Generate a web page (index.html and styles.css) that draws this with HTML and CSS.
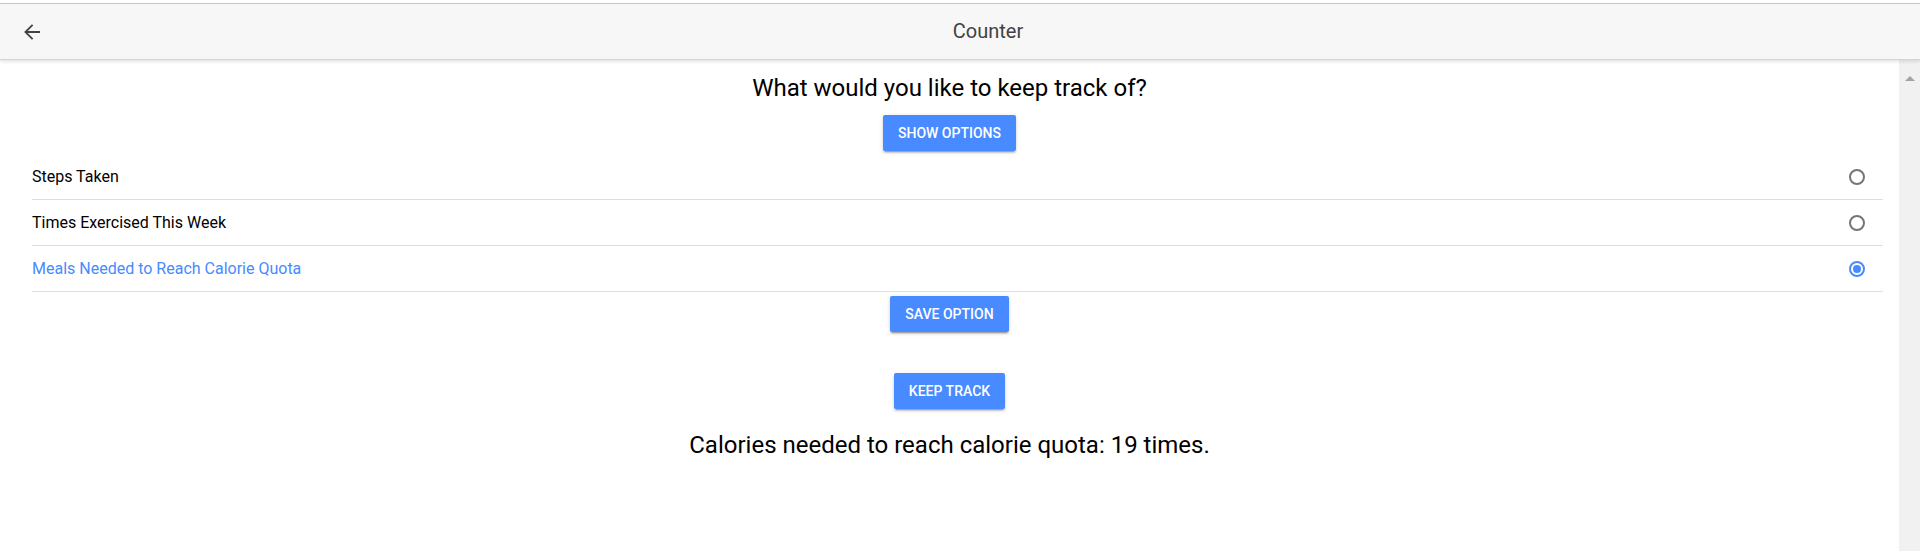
FILE: index.html
```html
<!DOCTYPE html>
<html lang="en">
<head>
<meta charset="utf-8">
<title>Counter</title>
<link rel="stylesheet" href="styles.css">
</head>
<body>
<div class="app">
  <header class="toolbar">
    <button class="back" aria-label="Back">
      <svg width="16" height="16" viewBox="0 0 16 16"><path d="M16 8H1.4M8.6 0.8L1.4 8l7.2 7.2" fill="none" stroke="#424242" stroke-width="1.8"/></svg>
    </button>
    <div class="title">Counter</div>
  </header>
  <div class="body">
    <main class="content">
      <h2 class="question">What would you like to keep track of?</h2>
      <button class="btn btn-show">Show Options</button>
      <ul class="options">
        <li class="option"><span class="label">Steps Taken</span><span class="radio"></span></li>
        <li class="option"><span class="label">Times Exercised This Week</span><span class="radio"></span></li>
        <li class="option selected"><span class="label">Meals Needed to Reach Calorie Quota</span><span class="radio checked"></span></li>
      </ul>
      <button class="btn btn-save">Save Option</button>
      <button class="btn btn-track">Keep Track</button>
      <p class="result">Calories needed to reach calorie quota: 19 times.</p>
    </main>
    <div class="scrollbar"><span class="arrow-up"></span></div>
  </div>
</div>
</body>
</html>
```

FILE: styles.css
```css
* { box-sizing: border-box; }
html, body { margin: 0; padding: 0; height: 100%; }
body {
  font-family: Roboto, "Liberation Sans", sans-serif;
  background: #fff;
  color: #000;
}
.app {
  display: flex;
  flex-direction: column;
  height: 551px;
  padding-top: 3px;
}
.toolbar {
  position: relative;
  z-index: 2;
  display: flex;
  align-items: center;
  height: 57px;
  background: #f7f7f7;
  border-top: 1px solid #c4c4c4;
  border-bottom: 1px solid #d4d4d4;
  box-shadow: 0 2px 3px rgba(0,0,0,0.10);
}
.back {
  width: 56px;
  height: 100%;
  padding: 0 0 0 24px;
  border: 0;
  background: transparent;
  display: flex;
  align-items: center;
}
.title {
  flex: 1;
  text-align: center;
  font-size: 20px;
  color: #424242;
  padding-bottom: 2px;
}
.body {
  flex: 1;
  display: flex;
  min-height: 0;
}
.content {
  flex: 1;
  display: flex;
  flex-direction: column;
  align-items: center;
}
.question {
  margin: 14px 0 0;
  font-size: 24px;
  font-weight: 400;
  line-height: 28px;
}
.btn {
  height: 36px;
  padding: 0 15px;
  border: 0;
  border-radius: 2px;
  background: #488aff;
  color: #fff;
  font-family: Roboto, "Liberation Sans", sans-serif;
  font-size: 14px;
  font-weight: 500;
  text-transform: uppercase;
  box-shadow: 0 2px 2px rgba(0,0,0,0.14), 0 3px 1px -2px rgba(0,0,0,0.2), 0 1px 5px rgba(0,0,0,0.12);
}
.btn-show { margin-top: 13px; }
.options {
  list-style: none;
  margin: 3px 0 0;
  padding: 0;
  align-self: stretch;
  margin-left: 32px;
  margin-right: 16px;
}
.option {
  display: flex;
  align-items: center;
  justify-content: space-between;
  height: 46px;
  border-bottom: 1px solid #dedede;
  font-size: 16px;
  padding-right: 18px;
}
.option.selected .label { color: #488aff; }
.radio {
  width: 16px;
  height: 16px;
  border: 2px solid #757575;
  border-radius: 50%;
  display: flex;
  align-items: center;
  justify-content: center;
}
.radio.checked { border-color: #488aff; }
.radio.checked::after {
  content: "";
  width: 8px;
  height: 8px;
  border-radius: 50%;
  background: #488aff;
}
.btn-save { margin-top: 4px; }
.btn-track { margin-top: 41px; }
.result {
  margin: 22px 0 0;
  font-size: 24px;
  line-height: 28px;
}
.scrollbar {
  width: 21px;
  background: #f1f1f1;
  display: flex;
  justify-content: center;
  padding-top: 16px;
}
.arrow-up {
  width: 0;
  height: 0;
  border-left: 5px solid transparent;
  border-right: 5px solid transparent;
  border-bottom: 5px solid #a3a3a3;
}
```
